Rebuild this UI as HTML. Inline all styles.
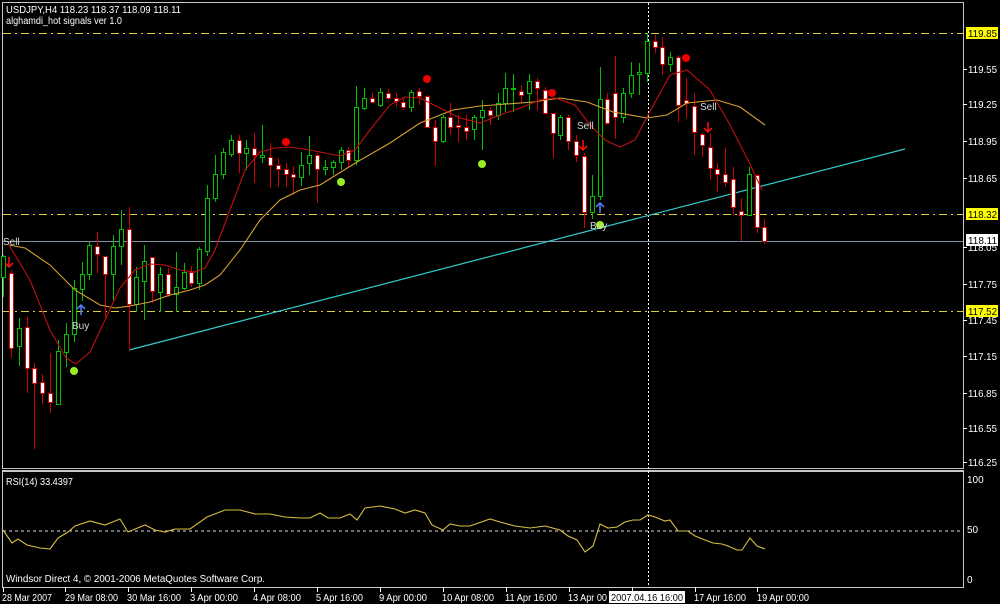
<!DOCTYPE html>
<html><head><meta charset="utf-8">
<style>
html,body{margin:0;padding:0;background:#000;}
svg{display:block;font-family:"Liberation Sans","DejaVu Sans",sans-serif;}
</style></head>
<body>
<svg id="c" width="1000" height="604" viewBox="0 0 1000 604" xmlns="http://www.w3.org/2000/svg">
<rect width="1000" height="604" fill="#000"/>
<rect x="2.5" y="2.5" width="961" height="466" fill="none" stroke="#c8c8c8" stroke-width="1"/>
<line x1="2" y1="470.5" x2="964" y2="470.5" stroke="#c8c8c8"/>
<rect x="2.5" y="471.5" width="961" height="116" fill="none" stroke="#c8c8c8" stroke-width="1"/>
<g stroke="#d8d040" stroke-width="1" stroke-dasharray="8,4,2,4" fill="none">
<line x1="3" y1="33.5" x2="963" y2="33.5"/>
<line x1="3" y1="214.5" x2="963" y2="214.5"/>
<line x1="3" y1="311.5" x2="963" y2="311.5"/>
</g>
<line x1="3" y1="241.5" x2="963" y2="241.5" stroke="#8090a0" stroke-width="1"/>
<line x1="648.5" y1="3" x2="648.5" y2="587" stroke="#fff" stroke-width="1" stroke-dasharray="2,2"/>
<line x1="129" y1="350" x2="905" y2="149" stroke="#33cccc" stroke-width="1.2"/>
<g id="candles"></g>
<polyline fill="none" stroke="#d9a030" stroke-width="1.1" points="9,245 25,248 50,265 75,290 100,305 115,308 130,306 150,302 170,295 190,290 205,285 220,275 240,250 260,220 280,200 300,190 320,185 357,162 390,143 420,123 453,110 480,106 507,104 533,102 560,98 587,102 613,112 647,118 667,115 687,103 717,100 740,107 765,125"/>
<polyline fill="none" stroke="#c01010" stroke-width="1.1" points="9,245 30,280 50,330 66,358 76,364 90,352 105,320 120,288 135,270 150,264 165,265 180,270 195,272 205,268 215,250 230,210 245,170 260,152 275,148 290,147 310,150 325,153 340,156 355,150 370,130 390,105 405,97 420,98 440,108 460,118 480,123 500,115 520,108 540,100 555,98 575,105 590,125 605,140 620,147 635,140 647,117 670,75 687,70 710,90 730,125 748,160 762,190"/>
<g id="sig"></g>
<text x="6" y="13" fill="#fff" font-size="10.5" textLength="175" lengthAdjust="spacingAndGlyphs">USDJPY,H4  118.23 118.37 118.09 118.11</text>
<text x="6" y="24" fill="#fff" font-size="10.5" textLength="116" lengthAdjust="spacingAndGlyphs">alghamdi_hot signals ver 1.0</text>
<g fill="#d8d8d8" font-size="10">
<text x="3" y="245">Sell</text>
<text x="72" y="329">Buy</text>
<text x="577" y="129">Sell</text>
<text x="590" y="229">Buy</text>
<text x="700" y="110">Sell</text>
</g>
<g fill="#fff" font-size="10.5" id="pa"></g>
<line x1="3" y1="531" x2="963" y2="531" stroke="#ddd" stroke-dasharray="3,3"/>
<polyline fill="none" stroke="#d8c040" stroke-width="1.1" points="3,530 12,543 18,539 27,545 40,548 50,549 58,538 68,532 75,526 90,521 105,525 120,519 128,532 145,525 155,530 165,532 175,529 190,529 207,517 225,510 240,510 255,514 270,514 285,517 300,518 310,518 320,513 328,518 340,518 350,514 357,520 365,508 380,506 395,509 405,513 415,510 425,513 432,525 443,530 450,524 460,526 470,526 490,519 500,522 515,526 530,528 545,526 560,530 568,536 577,540 585,552 593,546 600,524 608,528 617,527 625,522 633,520 640,520 648,515 655,517 665,521 670,520 678,531 688,531 695,536 705,540 713,543 722,544 728,546 737,550 742,550 750,538 757,546 765,549"/>
<text x="6" y="485" fill="#fff" font-size="10" textLength="67" lengthAdjust="spacingAndGlyphs">RSI(14) 33.4397</text>
<text x="6" y="582" fill="#fff" font-size="10" textLength="259" lengthAdjust="spacingAndGlyphs">Windsor Direct 4, © 2001-2006 MetaQuotes Software Corp.</text>
<g fill="#fff" font-size="10">
<text x="967" y="483">100</text>
<text x="967" y="533">50</text>
<text x="967" y="583">0</text>
</g>
<rect x="609" y="591" width="76" height="12" fill="#fff"/>
<g fill="#fff" font-size="10.5" id="ta"></g>
<g stroke="#fff" id="tt"></g>
</svg>
<script>
var NS="http://www.w3.org/2000/svg";
function el(p,t,a){var e=document.createElementNS(NS,t);for(var k in a)e.setAttribute(k,a[k]);p.appendChild(e);return e;}
var D=[
['u',256,277,255,297],
['d',273,348,270,358],['u',328,346,318,366],['d',327,368,317,393],['d',368,383,363,449],['d',382,393,374,404],
['d',393,402,353,413],['u',351,404,340,404],['u',334,352,323,367],['u',288,334,280,342],['u',274,289,262,301],
['u',245,274,242,280],['d',246,254,232,273],['d',256,274,256,317],['u',246,274,235,300],['u',229,246,210,265],
['d',229,304,207,350],['u',277,304,267,312],['u',261,281,245,320],['d',257,291,257,303],['u',274,292,267,312],
['d',274,294,268,297],['u',287,294,252,312],['u',272,288,263,290],['d',272,283,266,287],['u',249,283,247,290],
['u',198,251,185,256],['u',174,198,155,202],['u',152,174,148,179],['u',140,154,135,157],['d',140,153,135,173],
['u',148,153,140,170],['d',148,155,133,183],['u',155,157,125,163],['d',157,165,143,188],['d',165,169,158,187],
['d',169,174,163,187],['d',174,177,166,195],['u',165,177,152,186],['u',155,163,136,175],['d',155,169,153,203],
['u',167,169,160,175],['u',162,167,160,175],['u',150,162,147,170],['d',150,160,147,167],['u',107,160,86,165],
['u',98,108,88,110],['d',98,102,93,103],['u',92,105,88,107],['d',93,98,89,100],['d',98,101,93,107],
['d',102,107,97,110],['u',92,107,90,112],['d',91,96,88,105],['d',96,127,95,128],['d',127,141,120,166],
['u',117,141,115,143],['d',117,127,103,135],['d',125,127,115,142],['d',127,131,115,140],['u',117,129,115,140],
['u',110,117,100,150],['d',110,115,107,125],['u',103,115,93,120],['u',88,103,73,112],['u',88,89,74,112],
['d',91,95,85,103],['u',81,93,74,110],['d',81,88,78,110],['d',90,113,87,115],['d',113,133,113,158],
['u',117,135,115,140],['d',117,141,115,150],['d',141,155,135,162],['d',156,212,153,228],['u',196,212,175,219],
['u',99,196,67,200],['d',99,123,93,125],['d',93,117,56,139],['u',93,117,88,123],['u',75,93,62,98],
['u',72,74,63,95],['u',41,73,33,82],['d',41,47,35,53],['d',47,64,37,75],['u',57,64,52,72],
['d',57,105,55,122],['d',100,103,78,118],['d',106,132,93,155],['d',134,145,133,157],['d',147,168,133,180],
['d',169,174,163,192],['d',174,182,148,187],['d',179,207,167,215],['d',211,215,198,241],['u',174,215,167,215],
['d',175,227,174,233],['d',227,241,219,244]
];
var g=document.getElementById('candles');
for(var i=0;i<D.length;i++){
 var d=D[i],x=Math.round(3+7.85*i)+0.5;
 var col=d[0]=='u'?'#00c000':'#d00000';
 el(g,'line',{x1:x,y1:d[3],x2:x,y2:d[4],stroke:col,'stroke-width':1});
 var h=Math.max(1,d[2]-d[1]);
 el(g,'rect',{x:x-2,y:d[1]+0.5,width:4,height:h,fill:d[0]=='u'?'#000':'#fff',stroke:col,'stroke-width':1});
}
var s=document.getElementById('sig');
[[286,142],[427,79],[552,93],[686,58]].forEach(function(p){el(s,'circle',{cx:p[0],cy:p[1],r:4,fill:'#ee0000'});});
[[74,371],[341,182],[482,164],[600,225]].forEach(function(p){el(s,'circle',{cx:p[0],cy:p[1],r:4,fill:'#99ee22'});});
function arrow(x,y,up,col){
 if(up){el(s,'path',{d:'M'+x+' '+(y-5)+'V'+(y+5)+'M'+(x-4)+' '+(y-1)+'L'+x+' '+(y-5)+'L'+(x+4)+' '+(y-1),stroke:col,'stroke-width':1.6,fill:'none'});}
 else{el(s,'path',{d:'M'+x+' '+(y-5)+'V'+(y+5)+'M'+(x-4)+' '+(y+1)+'L'+x+' '+(y+5)+'L'+(x+4)+' '+(y+1),stroke:col,'stroke-width':1.6,fill:'none'});}
}
arrow(9,262,false,'#ee1111');arrow(81,310,true,'#5577ee');arrow(583,145,false,'#ee1111');arrow(600,208,true,'#5577ee');arrow(708,127,false,'#ee1111');
var pa=document.getElementById('pa');
[['119.55',69],['119.25',104],['118.95',141],['118.65',178],['118.05',247],['117.75',284],['117.45',320],['117.15',356],['116.85',393],['116.55',428],['116.25',462]].forEach(function(p){
 el(pa,'line',{x1:963,y1:p[1]+0.5,x2:967,y2:p[1]+0.5,stroke:'#fff'});
 var t=el(pa,'text',{x:968,y:p[1]+4,textLength:29,lengthAdjust:'spacingAndGlyphs'});t.textContent=p[0];
});
[['119.85',33,'#ffff00'],['118.32',214,'#ffff00'],['117.52',311,'#ffff00'],['118.11',240,'#ffffff']].forEach(function(p){
 el(pa,'rect',{x:966,y:p[1]-6,width:32,height:12,fill:p[2]});
 var t=el(pa,'text',{x:968,y:p[1]+4,fill:'#000',textLength:29,lengthAdjust:'spacingAndGlyphs'});t.textContent=p[0];
});
var ta=document.getElementById('ta');
[['28 Mar 2007',2,50],['29 Mar 08:00',65,53],['30 Mar 16:00',127,54],['3 Apr 00:00',190,48],['4 Apr 08:00',253,48],['5 Apr 16:00',316,47],['9 Apr 00:00',379,48],['10 Apr 08:00',442,52],['11 Apr 16:00',505,52],['13 Apr 00',568,39],['17 Apr 16:00',694,52],['19 Apr 00:00',757,52]].forEach(function(p){
 var t=el(ta,'text',{x:p[1],y:601,textLength:p[2],lengthAdjust:'spacingAndGlyphs'});t.textContent=p[0];
});
var t2=el(ta,'text',{x:611,y:601,fill:'#000',textLength:72,lengthAdjust:'spacingAndGlyphs'});t2.textContent='2007.04.16  16:00';
var tt=document.getElementById('tt');
[3,65,128,191,254,317,380,443,506,569,632,695,757].forEach(function(x){el(tt,'line',{x1:x+0.5,y1:587,x2:x+0.5,y2:592});});
</script>
</body></html>
